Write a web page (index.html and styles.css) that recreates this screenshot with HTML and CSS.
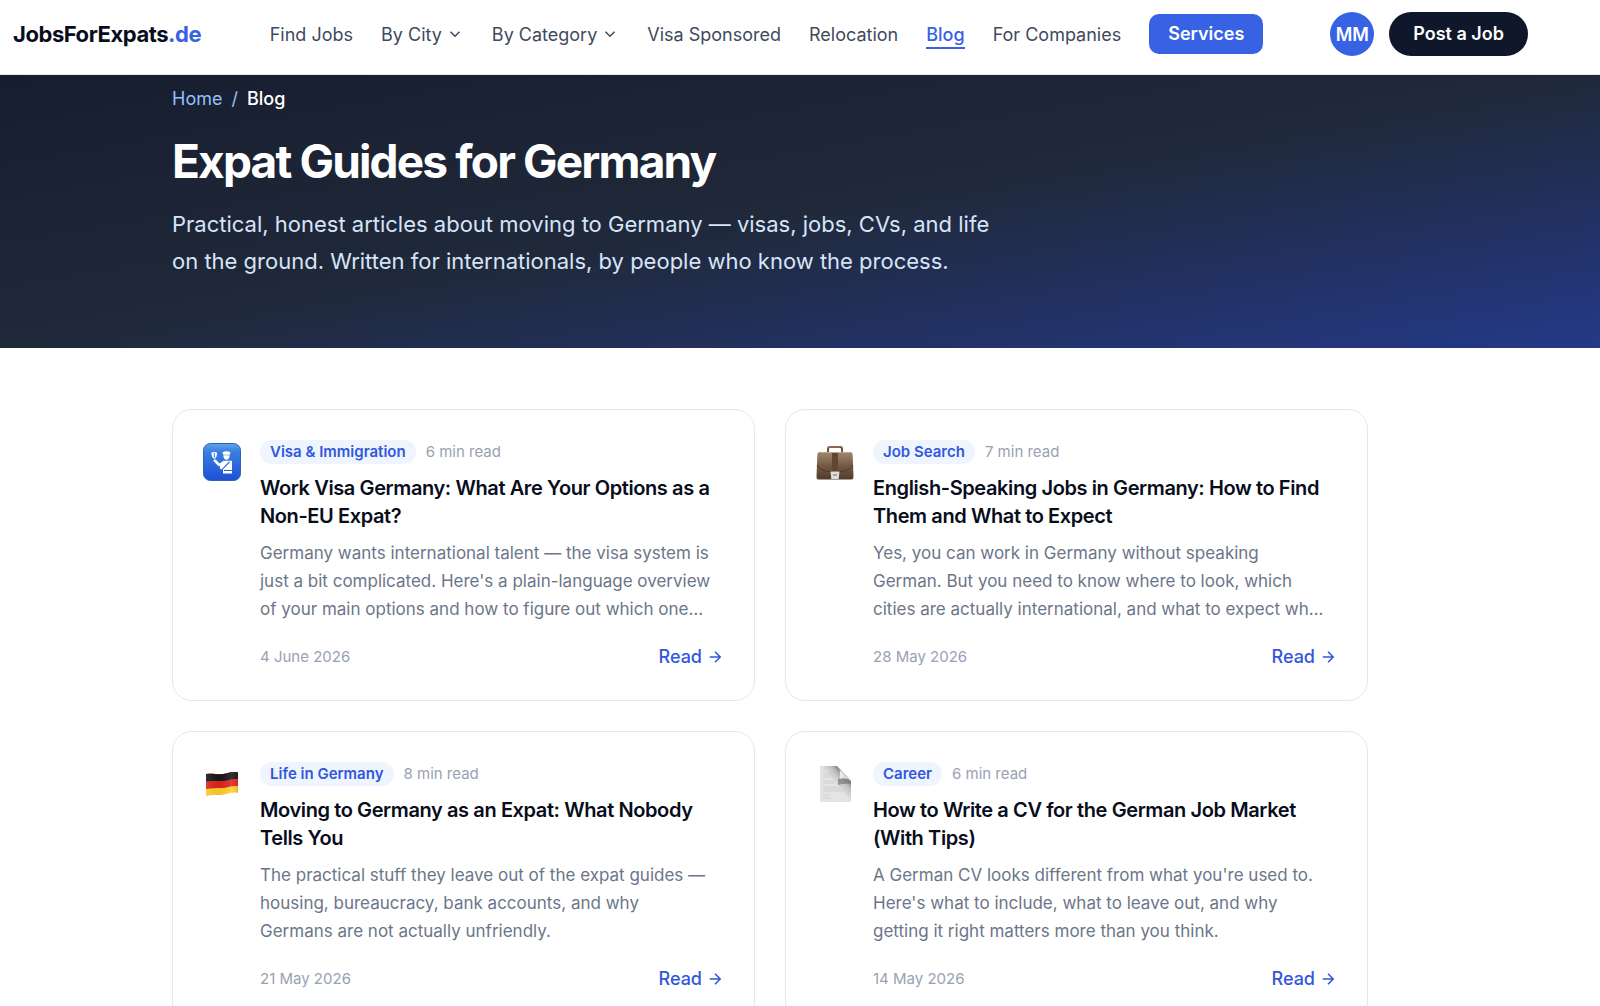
FILE: index.html
```html
<!DOCTYPE html>
<html lang="en">
<head>
<meta charset="utf-8">
<meta name="viewport" content="width=device-width, initial-scale=1">
<title>Blog | JobsForExpats.de</title>
<link rel="stylesheet" href="styles.css">
</head>
<body>
<header class="site-header">
  <a class="logo" href="#">JobsForExpats<span class="logo-tld">.de</span></a>
  <nav class="nav" aria-label="Main">
    <a class="nav-link" href="#">Find Jobs</a>
    <button class="nav-link nav-menu" type="button">By City
      <svg class="chevron" viewBox="0 0 24 24" aria-hidden="true"><path d="M6 9l6 6 6-6"/></svg></button>
    <button class="nav-link nav-menu" type="button">By Category
      <svg class="chevron" viewBox="0 0 24 24" aria-hidden="true"><path d="M6 9l6 6 6-6"/></svg></button>
    <a class="nav-link" href="#">Visa Sponsored</a>
    <a class="nav-link" href="#">Relocation</a>
    <a class="nav-link is-active" href="#" aria-current="page">Blog</a>
    <a class="nav-link" href="#">For Companies</a>
    <a class="services" href="#">Services</a>
  </nav>
  <div class="account">
    <button class="avatar" type="button">MM</button>
    <a class="post-job" href="#">Post a Job</a>
  </div>
</header>

<section class="hero">
  <div class="container">
    <nav class="breadcrumb" aria-label="Breadcrumb"><a href="#">Home</a><span>/</span><span class="current">Blog</span></nav>
    <h1>Expat Guides for Germany</h1>
    <p class="lead">Practical, honest articles about moving to Germany — visas, jobs, CVs, and life on the ground. Written for internationals, by people who know the process.</p>
  </div>
</section>

<main class="posts">
  <article class="card">
    <svg class="card-icon" viewBox="0 0 38 48" aria-hidden="true">
      <defs><linearGradient id="passport" x1="0" y1="0" x2="0" y2="1"><stop offset="0" stop-color="#62a5ec"/><stop offset=".22" stop-color="#397fe0"/><stop offset="1" stop-color="#1d50d3"/></linearGradient></defs>
      <rect x=".5" y="3.500" width="37" height="37" rx="7" fill="url(#passport)" stroke="#2c62b4"/>
      <g fill="#fff"><path d="M19.500 12.300q4-2 8 0l-.6 2.400h-6.800z"/><path d="M20.500 15.300h6v1.500q-.5 3-3 3t-3-3z"/><path d="M8.500 12.500l2.800-.8 2.700.8c.2 3.500-.8 5.500-2.700 6.500-2-1-3-3-2.800-6.500z"/><path d="M10 20.500l2.500-1.200 4 4.200 4-2.800h8.500v12.800h-9v-4.200l7-7-1-.8-7.800 8.200q-2-1-1.400-4.200l-1.300.7z"/></g>
      <path d="M21 30.500h8" stroke="#2860d8"/><path d="M11.300 12.700v5" stroke="#397fe0"/>
    </svg>
    <div class="card-body">
      <div class="meta"><span class="tag">Visa &amp; Immigration</span><span>6 min read</span></div>
      <h2>Work Visa Germany: What Are Your Options as a Non-EU Expat?</h2>
      <p class="excerpt">Germany wants international talent — the visa system is just a bit complicated. Here's a plain-language overview of your main options and how to figure out which one…</p>
      <div class="card-foot"><time datetime="2026-06-04">4 June 2026</time><a class="read" href="#">Read <svg viewBox="0 0 24 24" aria-hidden="true"><path d="M5 12h14M12 5l7 7-7 7"/></svg></a></div>
    </div>
  </article>

  <article class="card">
    <svg class="card-icon" viewBox="0 0 38 48" aria-hidden="true">
      <defs><linearGradient id="leather" x1="0" y1="0" x2="0" y2="1"><stop offset="0" stop-color="#a3886d"/><stop offset=".5" stop-color="#745a45"/><stop offset="1" stop-color="#513b2c"/></linearGradient></defs>
      <path d="M12 12v-3q0-2 2-2h10q2 0 2 2v3" fill="none" stroke="#76523f" stroke-width="2"/>
      <path d="M12.500 8q.5-1 1.500-1h10" fill="none" stroke="#a77d68"/>
      <path d="M4 12h30q2.500 0 2.700 3l.8 22q0 2.500-2 2.500h-33q-2 0-2-2.500l.8-22q.2-3 2.700-3z" fill="url(#leather)"/>
      <path d="M1 25q4 6 12 6.500h12q8-.5 12-6.500" fill="none" stroke="#4c3728"/>
      <path d="M16 12.500h6V31h-6z" fill="#63462f"/><path d="M4 12.500h30" stroke="#bba58e"/>
      <path d="M14.500 31.500h9l-.8 7.500h-7.400z" fill="#e0deda"/><path d="M17 34h4v2h-4z" fill="#aaa59d"/>
    </svg>
    <div class="card-body">
      <div class="meta"><span class="tag">Job Search</span><span>7 min read</span></div>
      <h2>English-Speaking Jobs in Germany: How to Find Them and What to Expect</h2>
      <p class="excerpt">Yes, you can work in Germany without speaking German. But you need to know where to look, which cities are actually international, and what to expect wh…</p>
      <div class="card-foot"><time datetime="2026-05-28">28 May 2026</time><a class="read" href="#">Read <svg viewBox="0 0 24 24" aria-hidden="true"><path d="M5 12h14M12 5l7 7-7 7"/></svg></a></div>
    </div>
  </article>

  <article class="card">
    <svg class="card-icon" viewBox="0 0 38 48" aria-hidden="true">
      <defs><clipPath id="flag"><path d="M3 12c7-1 9 .5 15 .3 7-.8 10-3.300 17-1.800v20.500c-7-1.500-10 1.300-16 1.800S10 32.500 3 34z"/></clipPath>
      <linearGradient id="sheen"><stop offset="0" stop-color="#fff" stop-opacity=".15"/><stop offset=".45" stop-color="#000" stop-opacity=".05"/><stop offset=".75" stop-color="#fff" stop-opacity=".12"/><stop offset="1" stop-color="#000" stop-opacity=".15"/></linearGradient></defs>
      <g clip-path="url(#flag)"><path d="M0 7h38v30H0z" fill="#ffd02b"/><path d="M0 7h38v17.500c-9-2-13 1.500-19 1.500S9 26 0 27.500z" fill="#e2231c"/><path d="M0 7h38v10.500c-9-2-13 1.500-19 1.500S9 18.500 0 20z" fill="#17181a"/><path d="M0 7h38v30H0z" fill="url(#sheen)"/></g>
    </svg>
    <div class="card-body">
      <div class="meta"><span class="tag">Life in Germany</span><span>8 min read</span></div>
      <h2>Moving to Germany as an Expat: What Nobody Tells You</h2>
      <p class="excerpt">The practical stuff they leave out of the expat guides — housing, bureaucracy, bank accounts, and why Germans are not actually unfriendly.</p>
      <div class="card-foot"><time datetime="2026-05-21">21 May 2026</time><a class="read" href="#">Read <svg viewBox="0 0 24 24" aria-hidden="true"><path d="M5 12h14M12 5l7 7-7 7"/></svg></a></div>
    </div>
  </article>

  <article class="card">
    <svg class="card-icon" viewBox="0 0 38 48" aria-hidden="true">
      <defs><linearGradient id="curl" x1="0" y1="0" x2="1" y2=".7"><stop offset=".15" stop-color="#666"/><stop offset=".4" stop-color="#f2f2f2"/><stop offset="1" stop-color="#ccc"/></linearGradient>
      <linearGradient id="shade" x1="0" y1="1" x2="1" y2="0"><stop offset=".5" stop-color="#e4e4e4"/><stop offset=".68" stop-color="#bbb"/><stop offset=".85" stop-color="#555"/></linearGradient></defs>
      <path d="M4 4h17l14 15v21H4z" fill="url(#shade)"/>
      <path d="M22 17q7-3 13 2v3q-6-1-13 1z" fill="#777" opacity=".7"/>
      <path d="M20 4q5 3 4 13 6-2 11 2z" fill="url(#curl)"/>
      <path d="M7 7h4M7 11h12M7 13h12M7 15h11M7 19h12M7 21h12M7 25h24M7 27h24M7 29h22M7 33h6M7 36h8" stroke="#c9c9c9" stroke-width=".7"/>
    </svg>
    <div class="card-body">
      <div class="meta"><span class="tag">Career</span><span>6 min read</span></div>
      <h2>How to Write a CV for the German Job Market (With Tips)</h2>
      <p class="excerpt">A German CV looks different from what you're used to. Here's what to include, what to leave out, and why getting it right matters more than you think.</p>
      <div class="card-foot"><time datetime="2026-05-14">14 May 2026</time><a class="read" href="#">Read <svg viewBox="0 0 24 24" aria-hidden="true"><path d="M5 12h14M12 5l7 7-7 7"/></svg></a></div>
    </div>
  </article>
</main>
</body>
</html>
```
FILE: styles.css
```css
* { box-sizing: border-box; }

:root {
  --blue: #3662e3;
  --ink: #0f172a;
  --heading: #080d1c;
  --gutter-end: 60px;
}

body {
  margin: 0;
  background: #fff;
  color: var(--heading);
  font-family: Inter, "Liberation Sans", sans-serif;
  font-size: 18px;
}

a { color: inherit; text-decoration: none; }
button { border: 0; padding: 0; background: none; font: inherit; cursor: pointer; }
h1, h2, p { margin: 0; }

.site-header {
  display: flex;
  align-items: center;
  height: 75px;
  padding: 0 72px 6px 13px;
  border-bottom: 1px solid #e2e8f0;
  white-space: nowrap;
}
.logo { margin-right: auto; font-size: 22px; font-weight: 700; letter-spacing: -0.02em; }
.logo-tld { color: var(--blue); }

.nav { display: flex; align-items: center; gap: 28px; color: #3f4a5e; }
.nav-menu { display: flex; align-items: center; gap: 4px; color: inherit; }
.chevron { width: 18px; height: 18px; fill: none; stroke: currentColor; stroke-width: 2; }
.is-active { margin-bottom: -4px; padding-bottom: 2px; border-bottom: 2px solid; color: var(--blue); font-weight: 500; }
.services {
  padding: 0 19px;
  border-radius: 10px;
  background: var(--blue);
  color: #fff;
  font-weight: 600;
  line-height: 40px;
}

.account { display: flex; align-items: center; gap: 15px; margin-left: 67px; }
.avatar { width: 44px; height: 44px; border-radius: 50%; background: var(--blue); color: #fff; font-weight: 600; }
.post-job { padding: 0 24px; border-radius: 22px; background: var(--ink); color: #fff; font-weight: 600; line-height: 44px; }

.container { max-width: 1196px; margin: 0 auto; }

.hero {
  padding: 10px var(--gutter-end) 68px 0;
  background: linear-gradient(to bottom right, #161d2e, #20293a 50%, #243988);
  color: #fff;
}
.breadcrumb { display: flex; gap: 9px; color: #93c0fb; line-height: 28px; }
.breadcrumb .current { color: #fff; font-weight: 500; }
h1 { margin-top: 20px; font-size: 46px; font-weight: 700; line-height: 56px; letter-spacing: -0.04em; }
.lead { max-width: 840px; margin-top: 17px; color: #d7e4f8; font-size: 22px; line-height: 37px; }

.posts {
  display: grid;
  grid-template-columns: 1fr 1fr;
  gap: 30px;
  max-width: 1196px;
  margin-left: max(0px, calc((100% - var(--gutter-end) - 1196px) / 2));
  padding: 61px 0;
}
.card {
  display: flex;
  gap: 19px;
  padding: 30px 30px 29px;
  border: 1px solid #e4e8ef;
  border-radius: 20px;
}
.card-icon { flex: none; width: 38px; height: 48px; }
.card-body { flex: 1; min-width: 0; }
.meta { display: flex; align-items: center; gap: 10px; color: #98a2b3; font-size: 15px; line-height: 24px; }
.tag { padding: 0 10px; border-radius: 12px; background: #eff5ff; color: #3257dc; font-weight: 600; }
h2 { margin-top: 10px; font-size: 20px; font-weight: 600; line-height: 28px; letter-spacing: -0.02em; }
.excerpt { margin-top: 9px; padding-right: 10px; color: #6b7689; font-size: 17px; line-height: 28px; }
.card-foot { display: flex; justify-content: space-between; align-items: center; margin-top: 20px; color: #98a2b3; font-size: 15px; line-height: 28px; }
.read { display: flex; align-items: center; gap: 4px; color: #3257dc; font-size: 18px; font-weight: 500; }
.read svg { width: 18px; height: 18px; fill: none; stroke: currentColor; stroke-width: 2; }
```
